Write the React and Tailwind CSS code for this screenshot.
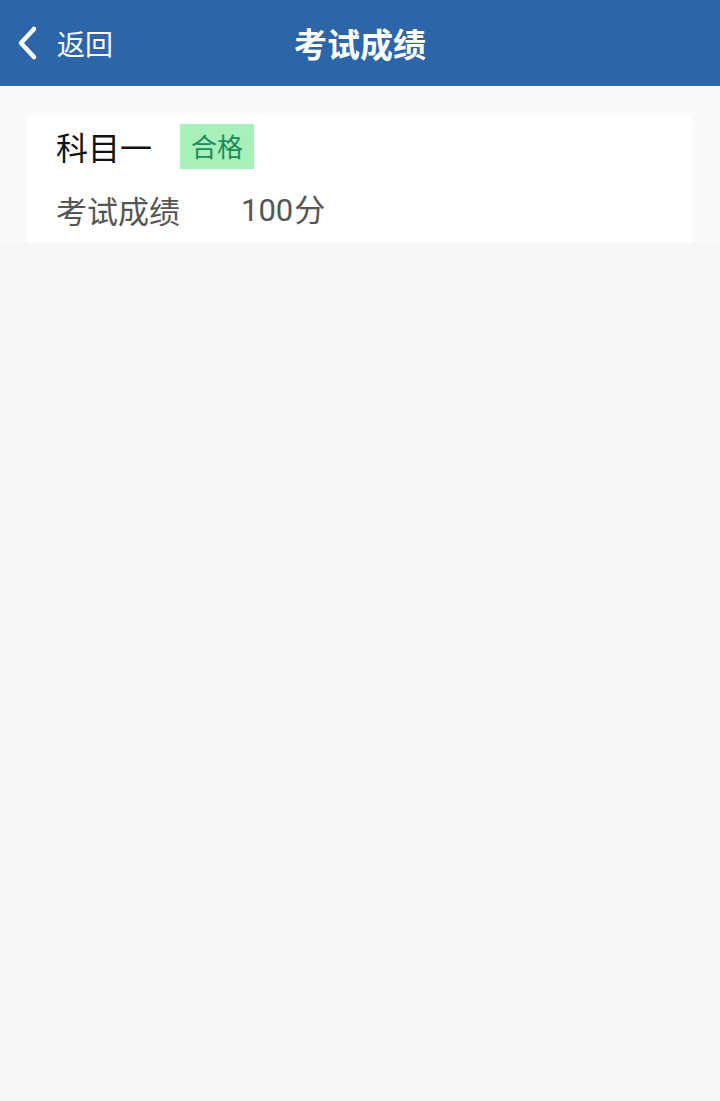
import React from 'react';

const font = { fontFamily: '"Noto Sans CJK SC", "Noto Sans", sans-serif' };

export default function App() {
  return (
    <div className="min-h-[1101px] w-[720px] bg-[#f6f6f6]" style={font}>
      {/* header */}
      <div className="relative h-[86px] bg-[#2c66a8] flex items-center justify-center">
        <button className="absolute left-[14px] top-0 h-full flex items-center gap-[15px] text-white">
          <svg width="28" height="40" viewBox="0 0 28 40" fill="none">
            <path d="M20 6 L7 20 L20 34" stroke="white" strokeWidth="4.5" strokeLinecap="round" strokeLinejoin="round" />
          </svg>
          <span className="text-[28px] leading-none">返回</span>
        </button>
        <h1 className="text-white text-[33px] font-bold leading-none">考试成绩</h1>
      </div>

      {/* content */}
      <div className="bg-[#fafafa] pt-[27px] px-[27px] pr-[28px]">
        <div className="bg-white rounded-t-[10px] h-[130px] px-[29px] flex flex-col">
          <div className="flex items-center h-[66px] pt-[0px]">
            <span className="text-[32px] text-[#111] leading-none">科目一</span>
            <span className="ml-[28px] h-[45px] px-[11px] flex items-center bg-[#a7f0b9] text-[#1d8a5c] text-[26px] leading-none">合格</span>
          </div>
          <div className="flex items-center h-[62px] pb-[2px] text-[#555] text-[31px] leading-none">
            <span className="w-[185px]">考试成绩</span>
            <span>
              <span style={{ fontFamily: 'Roboto, "Noto Sans", sans-serif' }}>100</span>
              <span className="ml-[1px]">分</span>
            </span>
          </div>
        </div>
      </div>
    </div>
  );
}
